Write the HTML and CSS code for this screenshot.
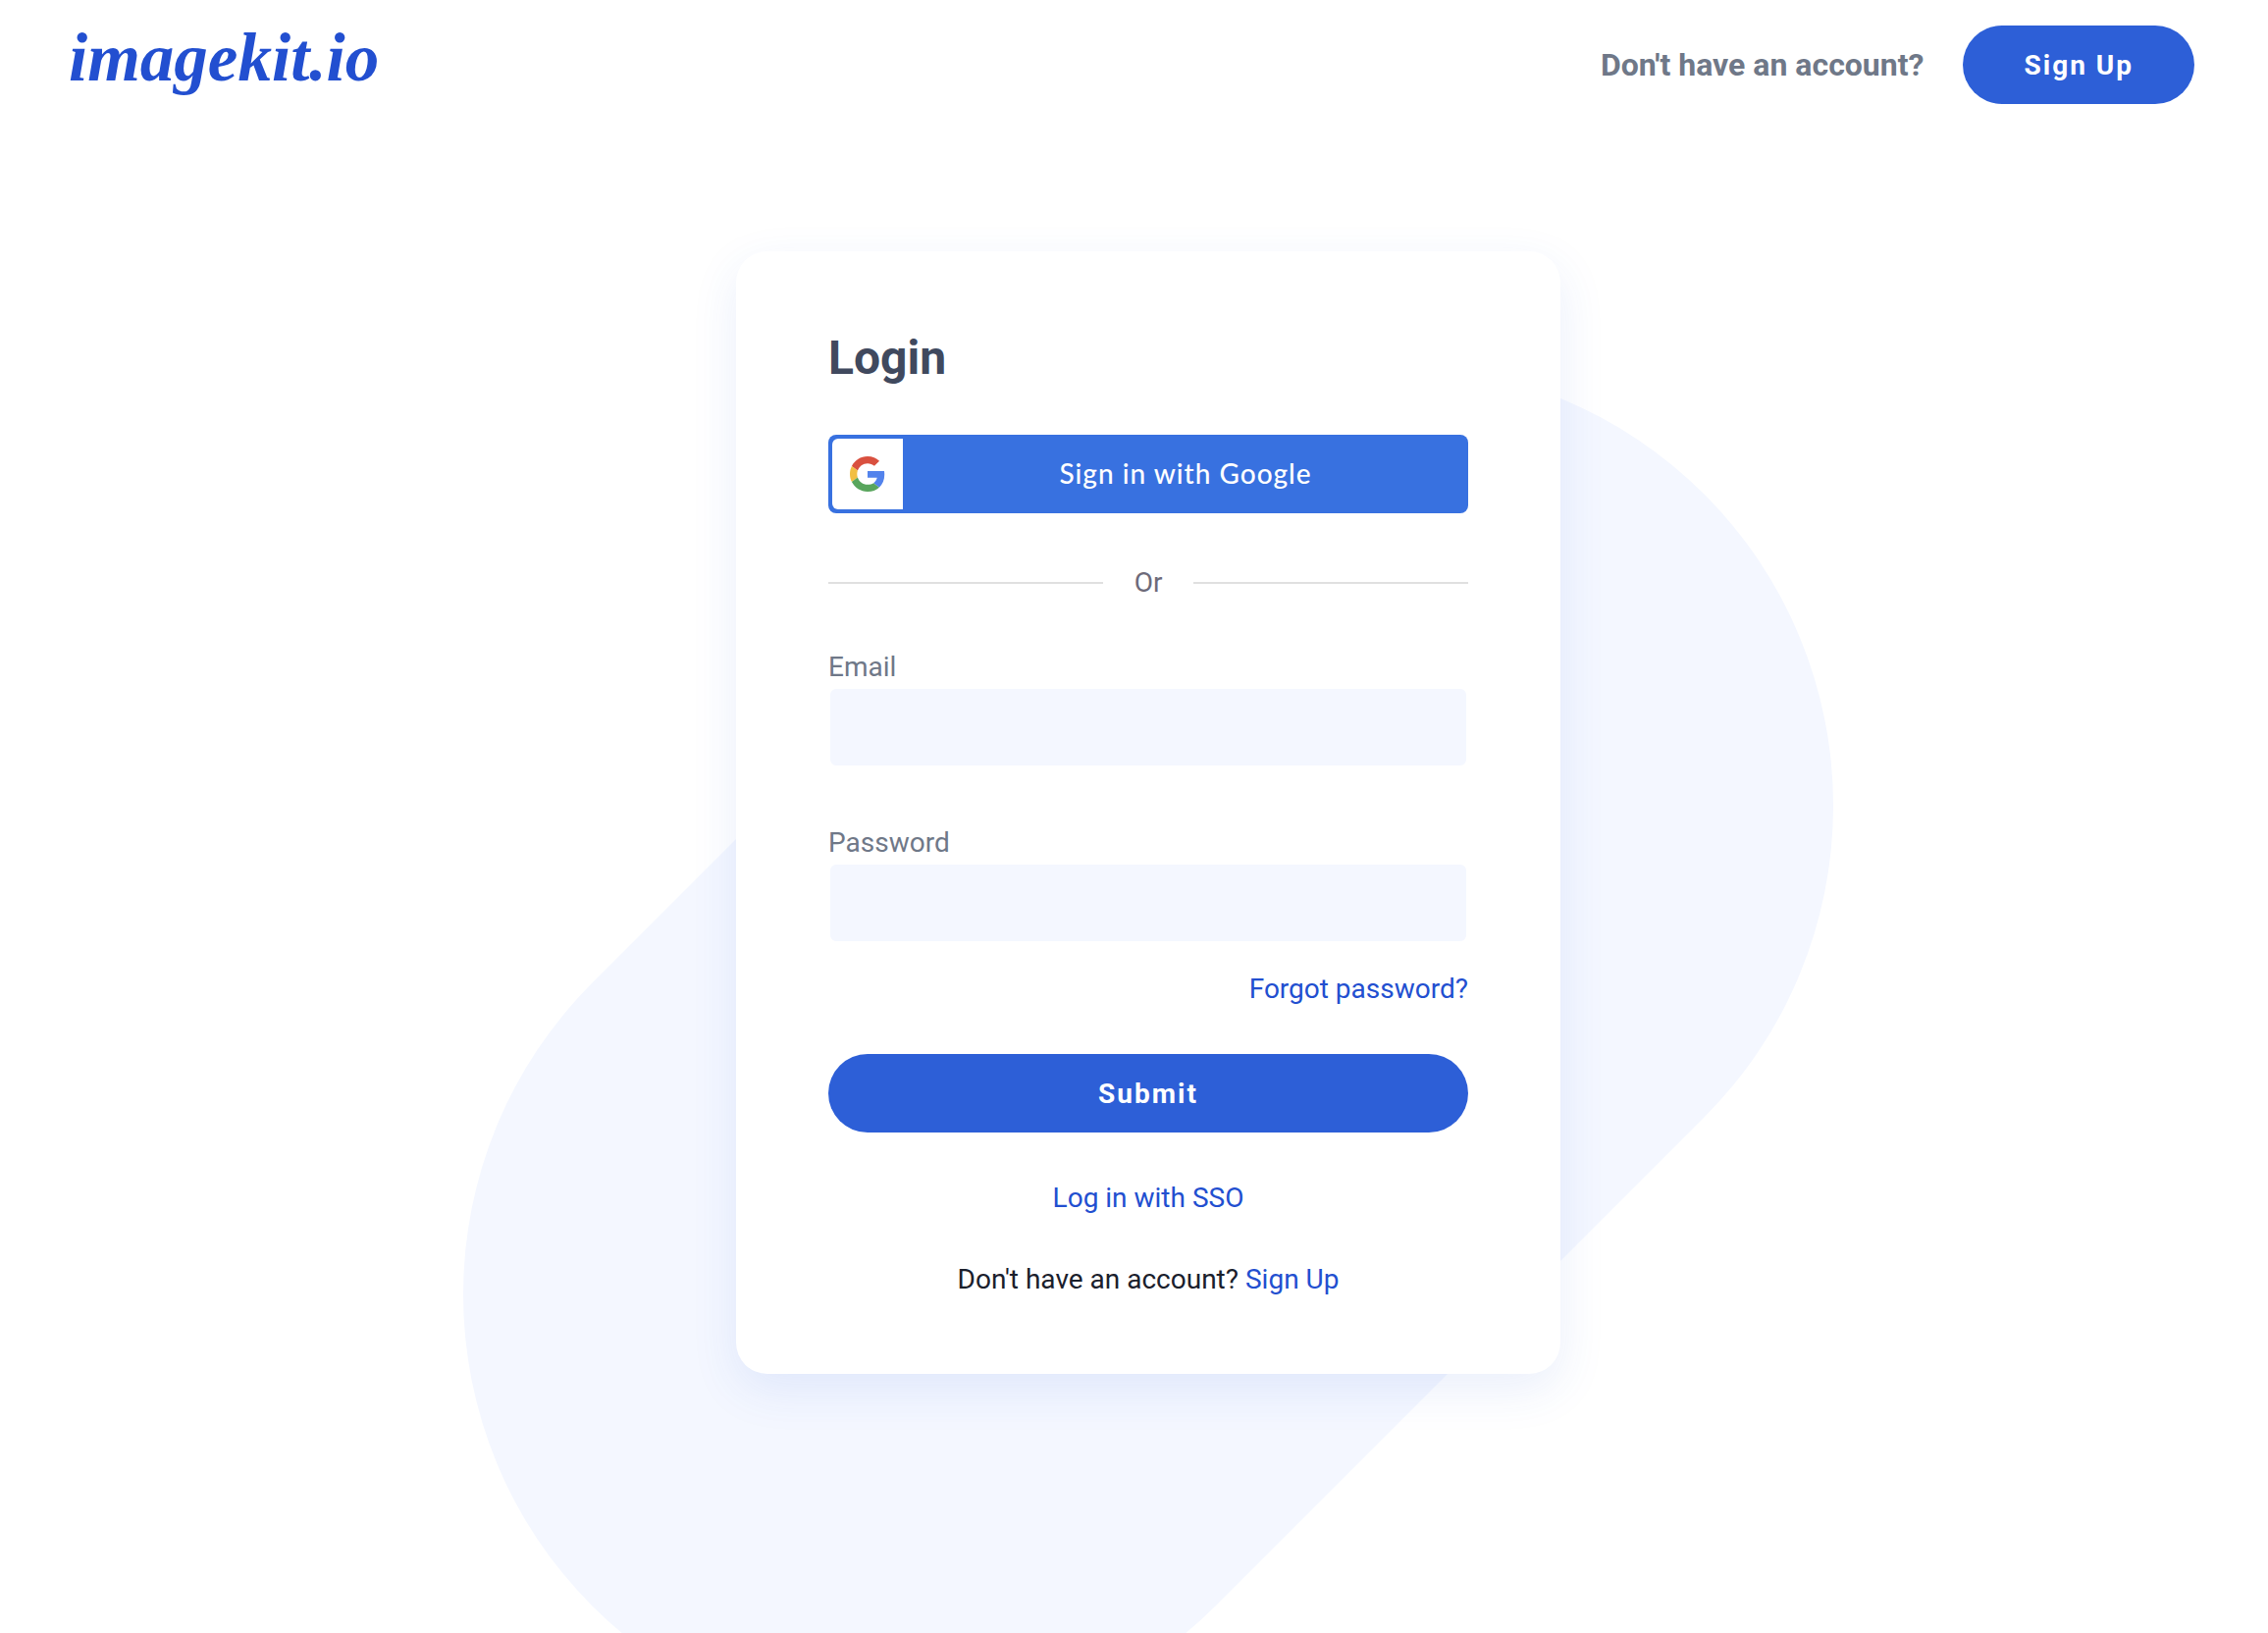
FILE: index.html
```html
<!DOCTYPE html>
<html lang="en">
<head>
  <meta charset="utf-8">
  <meta name="viewport" content="width=device-width, initial-scale=1">
  <title>Login - ImageKit.io</title>
  <link rel="stylesheet" href="styles.css">
</head>
<body>
  <div class="page">
    <svg class="backdrop" viewBox="0 0 1396 1396" aria-hidden="true">
      <path d="M449 947L947 449" stroke="#f4f7ff" stroke-width="898" stroke-linecap="round"/>
    </svg>
    <header class="header">
      <a class="logo" href="#">imagekit.io</a>
      <div class="header-actions">
        <span class="header-note">Don't have an account?</span>
        <button class="btn btn-signup" type="button">Sign Up</button>
      </div>
    </header>
    <main class="main">
      <form class="card">
        <h1 class="title">Login</h1>
        <button class="google" type="button">
          <span class="google-mark">
            <svg class="google-icon" viewBox="0 0 48 48" aria-hidden="true">
              <path fill="#d9503f" d="M24 9.500c3.540 0 6.710 1.220 9.210 3.600l6.850-6.850C35.900 2.380 30.470 0 24 0 14.620 0 6.510 5.380 2.560 13.220l7.980 6.190C12.430 13.720 17.740 9.500 24 9.500z"/>
              <path fill="#5383ec" d="M46.980 24.550c0-1.570-.15-3.090-.38-4.550H24v9.020h12.940c-.58 2.960-2.260 5.480-4.780 7.180l7.730 6c4.510-4.180 7.090-10.360 7.090-17.650z"/>
              <path fill="#f2bf42" d="M10.530 28.590c-.48-1.450-.76-2.990-.76-4.590s.27-3.140.76-4.590l-7.980-6.190C.92 16.460 0 20.120 0 24c0 3.880.92 7.540 2.560 10.780l7.970-6.190z"/>
              <path fill="#58a55c" d="M24 48c6.480 0 11.930-2.130 15.890-5.810l-7.730-6c-2.150 1.450-4.920 2.300-8.160 2.300-6.260 0-11.570-4.220-13.470-9.910l-7.980 6.190C6.510 42.620 14.620 48 24 48z"/>
            </svg>
          </span>
          <span class="google-label">Sign in with Google</span>
        </button>
        <div class="divider">Or</div>
        <div class="field">
          <label for="email">Email</label>
          <input id="email" type="email">
        </div>
        <div class="field">
          <label for="password">Password</label>
          <input id="password" type="password">
        </div>
        <a class="link forgot" href="#">Forgot password?</a>
        <button class="btn" type="submit">Submit</button>
        <a class="link sso" href="#">Log in with SSO</a>
        <p class="signup">Don't have an account? <a class="link" href="#">Sign Up</a></p>
      </form>
    </main>
  </div>
</body>
</html>
```
FILE: styles.css
```css
* {
  box-sizing: border-box;
}

body {
  margin: 0;
  background: #fff;
  color: #1a202c;
  font: 28px/40px Roboto, "Liberation Sans", sans-serif;
}

button,
input {
  font: inherit;
}

.page {
  position: relative;
  z-index: 0;
  min-height: 100vh;
  overflow: hidden;
}

/* Tilted pill behind the card */
.backdrop {
  position: absolute;
  z-index: -1;
  top: 372px;
  left: calc(50% + 14px);
  width: 1396px;
  height: 1396px;
  margin-left: -698px;
  fill: none;
}

.header {
  display: flex;
  align-items: flex-start;
  justify-content: space-between;
  padding: 26px 75px 0 70px;
}

.logo {
  color: #224fd0;
  font: italic bold 69px/66px "Liberation Serif", serif;
  text-decoration: none;
}

.header-actions {
  display: flex;
  align-items: center;
  gap: 40px;
}

.header-note {
  color: #6f7888;
  font-size: 32px;
  font-weight: 700;
}

.btn {
  height: 80px;
  padding: 2px 62px 0;
  border: 0;
  border-radius: 40px;
  background: #2d5fd7;
  color: #fff;
  font-weight: 700;
  letter-spacing: 2px;
}

.main {
  display: flex;
  justify-content: center;
  padding: 150px 0 80px 29px;
}

.card {
  display: flex;
  flex-direction: column;
  width: 100%;
  max-width: 840px;
  padding: 81px 94px 76px;
  border-radius: 32px;
  background: #fff;
  box-shadow: 0 16px 48px rgba(50, 100, 220, 0.1);
}

.title {
  margin: 0 0 50px;
  color: #40495e;
  font-size: 48px;
  line-height: 56px;
}

.google {
  display: flex;
  height: 80px;
  padding: 4px 0 4px 4px;
  border: 0;
  border-radius: 8px;
  background: #3871e0;
  color: #fff;
  font-weight: 500;
  letter-spacing: 1px;
}

.google-mark {
  display: grid;
  place-items: center;
  width: 72px;
  height: 72px;
  border-radius: 6px 0 0 6px;
  background: #fff;
}

.google-icon {
  width: 36px;
  height: 36px;
}

.google-label {
  flex: 1;
  align-self: center;
  padding-bottom: 2px;
  font-family: Lato, sans-serif;
}

.divider {
  display: flex;
  align-items: center;
  gap: 32px;
  margin: 51px 0 46px;
  color: #6d6a7a;
}

.divider::before,
.divider::after {
  content: "";
  flex: 1;
  height: 2px;
  background: #e0e0e0;
}

.field {
  display: flex;
  flex-direction: column;
  color: #6f7888;
}

.field + .field {
  margin-top: 57px;
}

.field input {
  height: 82px;
  padding: 0 24px;
  border: 2px solid #fff;
  border-radius: 8px;
  background: #f4f7ff;
}

.link {
  color: #224fd0;
  text-decoration: none;
}

.forgot {
  align-self: flex-end;
  margin: 27px 0 46px;
}

.sso {
  align-self: center;
  margin: 47px 0 43px;
}

.signup {
  margin: 0;
  text-align: center;
}
```
